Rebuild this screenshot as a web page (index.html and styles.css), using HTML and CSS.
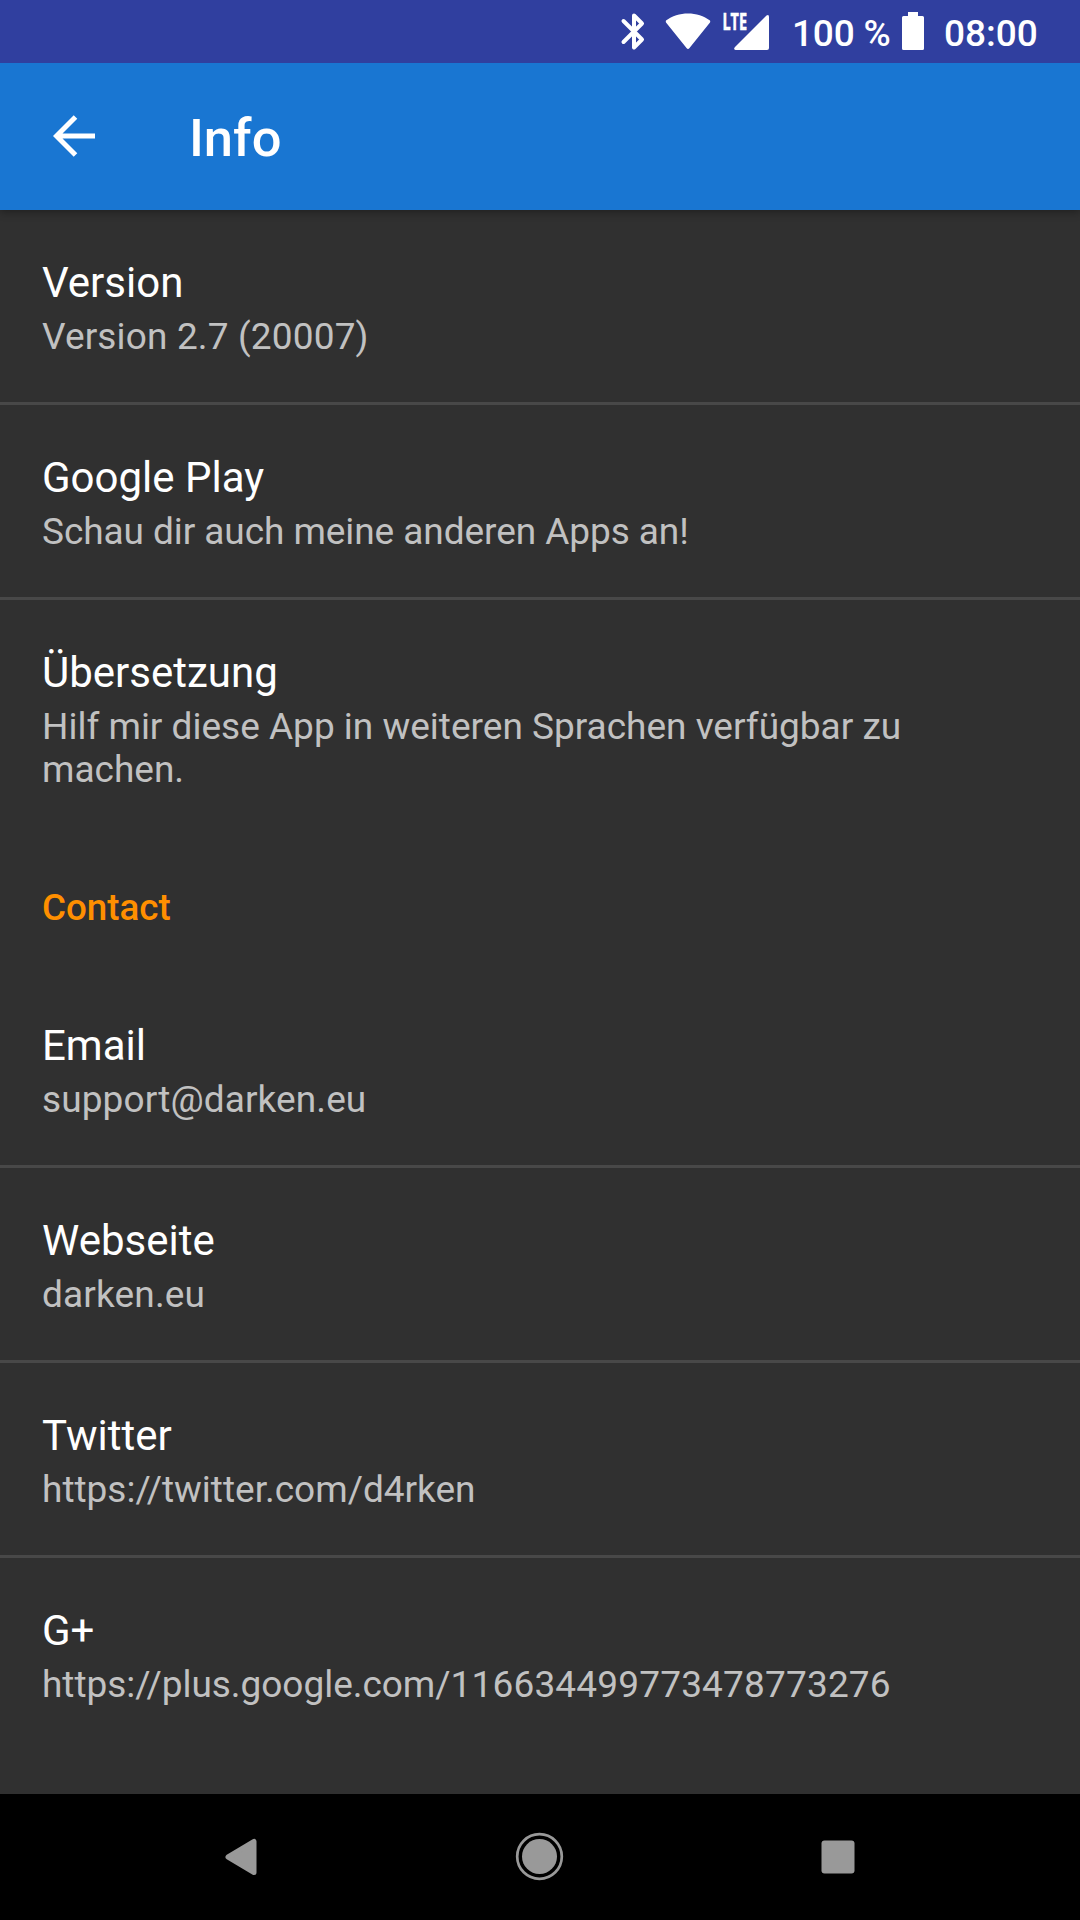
FILE: index.html
```html
<!DOCTYPE html>
<html lang="de">
<head>
<meta charset="utf-8">
<title>Info</title>
<link rel="stylesheet" href="styles.css">
</head>
<body>
<div class="screen">
  <header class="status">
    <svg class="icons" width="170" height="63" viewBox="0 0 170 63" fill="#fff">
      <path d="M3.500 21L22 39.500L14 47.500V15.500L22 23.500L3.500 42" fill="none" stroke="#fff" stroke-width="4" stroke-linecap="round" stroke-linejoin="round"/>
      <path d="M46 20.500C58 11 78 11 90 20.500Q90.500 21.500 90 22.500L69.500 48Q68 50 66.500 48L46 22.500Q45.500 21.500 46 20.500z"/>
      <text class="lte" x="102.500" y="29.500" textLength="24.500" lengthAdjust="spacingAndGlyphs">LTE</text>
      <path d="M146.500 15.500Q149 14 149 17V48Q149 50 147 50H115.500Q113 49.500 115 47z"/>
    </svg>
    <span class="pct">100 %</span>
    <svg class="battery" width="22" height="63" viewBox="0 0 22 63"><path d="M6 12h10v4h4.500Q22 16 22 17.500v31Q22 50 20.500 50h-19Q0 50 0 48.500v-31Q0 16 1.500 16H6z" fill="#fff"/></svg>
    <span class="clock">08:00</span>
  </header>
  <div class="appbar">
    <svg class="back" width="42" height="42" viewBox="0 0 42 42"><path d="M42 21H5M22.500 2L3.500 21l19 19" fill="none" stroke="#fff" stroke-width="5"/></svg>
    <h1>Info</h1>
  </div>
  <main class="list">
    <section class="item"><h2>Version</h2><p class="wide">Version 2.7 (20007)</p></section>
    <section class="item"><h2>Google Play</h2><p class="tight">Schau dir auch meine anderen Apps an!</p></section>
    <section class="item last"><h2>Übersetzung</h2><p>Hilf mir diese App in weiteren Sprachen verfügbar zu machen.</p></section>
    <h3 class="category">Contact</h3>
    <section class="item"><h2>Email</h2><p class="loose">support@darken.eu</p></section>
    <section class="item"><h2>Webseite</h2><p class="wide">darken.eu</p></section>
    <section class="item"><h2>Twitter</h2><p>https://twitter.com/d4rken</p></section>
    <section class="item last"><h2>G+</h2><p class="digits">https://plus.google.com/<span class="id">116634499773478773276</span></p></section>
  </main>
  <nav class="navbar">
    <svg width="1080" height="126" viewBox="0 0 1080 126" fill="#999">
      <path d="M228 63l26-15.500v31z" stroke="#999" stroke-width="5" stroke-linejoin="round"/>
      <circle cx="539.500" cy="62.500" r="17.500"/><circle cx="539.500" cy="62.500" r="22.300" fill="none" stroke="#999" stroke-width="2.700"/>
      <rect x="821.500" y="46.500" width="33" height="33" rx="3"/>
    </svg>
  </nav>
</div>
</body>
</html>
```
FILE: styles.css
```css
* { box-sizing: border-box; }
body { margin: 0; background: #303030; color: #fff; font-family: Roboto, sans-serif; }
h1, h2, h3, p { margin: 0; font-weight: 400; }
svg { display: block; }
.screen { width: 1080px; height: 1920px; display: flex; flex-direction: column; overflow: hidden; }
.status { position: relative; z-index: 2; height: 63px; flex: none; background: #303f9f; display: flex; align-items: center; padding-left: 620px; font-size: 37px; font-weight: 500; line-height: 63px; }
.icons, .battery { flex: none; }
.lte { font-family: "Open Sans", sans-serif; font-size: 22.5px; font-weight: 700; stroke: #fff; stroke-width: .6px; }
.pct { width: 110px; margin-left: 2px; padding-top: 3px; letter-spacing: -.2px; white-space: nowrap; }
.clock { margin-left: 20px; padding-top: 3px; }
.appbar { position: relative; z-index: 1; height: 147px; flex: none; background: #1976d2; display: flex; align-items: center; padding-left: 53px; box-shadow: 0 2px 8px rgba(0, 0, 0, .35); }
.back { margin-bottom: 1px; }
.appbar h1 { font-size: 52.5px; font-weight: 500; margin-left: 94px; padding-top: 3px; }
.list { flex: 1; min-height: 0; overflow: hidden; }
.item { height: 195px; padding: 48px 42px 0; border-bottom: 3px solid #484848; }
.item h2 { font-size: 42px; line-height: 50px; }
.item p { font-size: 37px; line-height: 43px; margin-top: 7px; color: #c1c1c1; }
.item .wide { letter-spacing: .15px; }
.item .loose { letter-spacing: .1px; }
.item .tight { letter-spacing: -.07px; }
.item .digits { letter-spacing: -.03px; }
.item .id { letter-spacing: .17px; }
.item.last { height: 237px; border-bottom: 0; }
.category { font-size: 36.75px; font-weight: 500; color: #ff8f00; padding: 3px 0 0 42px; height: 136px; line-height: 136px; }
.navbar { height: 126px; background: #000; flex: none; }
```
